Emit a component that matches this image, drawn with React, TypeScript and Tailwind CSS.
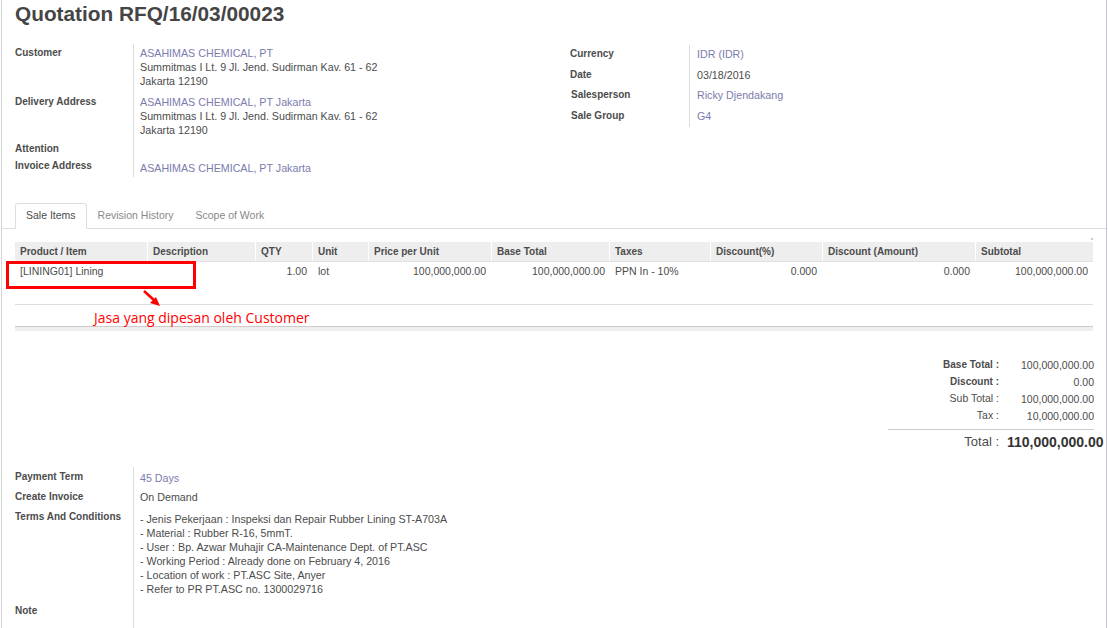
export default function App() {
  const link = "text-[#7c7bad]";

  const columns = [
    { title: "Product / Item", w: "w-[132px]" },
    { title: "Description", w: "w-[108px]" },
    { title: "QTY", w: "w-[57px]" },
    { title: "Unit", w: "w-[56px]" },
    { title: "Price per Unit", w: "w-[123px]" },
    { title: "Base Total", w: "w-[118px]" },
    { title: "Taxes", w: "w-[101px]" },
    { title: "Discount(%)", w: "w-[112px]" },
    { title: "Discount (Amount)", w: "w-[153px]" },
    { title: "Subtotal", w: "w-[118px]" },
  ];

  const terms = [
    "- Jenis Pekerjaan : Inspeksi dan Repair Rubber Lining ST-A703A",
    "- Material : Rubber R-16, 5mmT.",
    "- User : Bp. Azwar Muhajir CA-Maintenance Dept. of PT.ASC",
    "- Working Period : Already done on February 4, 2016",
    "- Location of work : PT.ASC Site, Anyer",
    "- Refer to PR PT.ASC no. 1300029716",
  ];

  return (
    <div className="w-[1108px] h-[628px] overflow-hidden bg-white pl-[1px] font-['Liberation_Sans',Arial,sans-serif] text-[#4c4c4c]">
      <div className="relative w-[1106px] h-[628px] border-l border-r border-l-[#d4d4d4] border-r-[#c4c4d4]">
        {/* title */}
        <h1 className="pl-[13px] h-[28px] leading-[28px] text-[20.8px] font-bold text-[#454545]">
          Quotation RFQ/16/03/00023
        </h1>

        {/* header fields */}
        <div className="flex mt-[16px] pl-[13px] text-[10.7px] leading-[14px]">
          <div className="w-[555px] grid grid-cols-[118px_1fr] content-start">
            <div className="pt-[2px] text-[10px] font-bold">Customer</div>
            <div className="pt-[2px] pl-[6px] border-l border-[#ddd]">
              <div className={link}>ASAHIMAS CHEMICAL, PT</div>
              <div>Summitmas I Lt. 9 Jl. Jend. Sudirman Kav. 61 - 62</div>
              <div>Jakarta 12190</div>
            </div>
            <div className="pt-[7px] text-[10px] font-bold">Delivery Address</div>
            <div className="pt-[7px] pl-[6px] border-l border-[#ddd]">
              <div className={link}>ASAHIMAS CHEMICAL, PT Jakarta</div>
              <div>Summitmas I Lt. 9 Jl. Jend. Sudirman Kav. 61 - 62</div>
              <div>Jakarta 12190</div>
            </div>
            <div className="pt-[5px] text-[10px] font-bold">Attention</div>
            <div className="pt-[5px] pl-[6px] border-l border-[#ddd] h-[19px]"></div>
            <div className="pt-[3px] text-[10px] font-bold">Invoice Address</div>
            <div className="pt-[5px] pb-[2px] pl-[6px] border-l border-[#ddd]">
              <div className={link}>ASAHIMAS CHEMICAL, PT Jakarta</div>
            </div>
          </div>

          <div className="w-[410px] mt-[1px] grid grid-cols-[119px_1fr] content-start">
            <div className="pt-[2px] text-[10px] font-bold">Currency</div>
            <div className={`pt-[2px] pl-[7px] border-l border-[#ddd] ${link}`}>IDR (IDR)</div>
            <div className="pt-[7px] text-[10px] font-bold">Date</div>
            <div className="pt-[7px] pl-[7px] border-l border-[#ddd]">03/18/2016</div>
            <div className="pt-[6px] pl-[1px] text-[10px] font-bold">Salesperson</div>
            <div className={`pt-[6px] pl-[7px] border-l border-[#ddd] ${link}`}>Ricky Djendakang</div>
            <div className="pt-[7px] pl-[1px] text-[10px] font-bold">Sale Group</div>
            <div className={`pt-[7px] pb-[4px] pl-[7px] border-l border-[#ddd] ${link}`}>G4</div>
          </div>
        </div>

        {/* tabs */}
        <div className="flex mt-[26px] pl-[13px] border-b border-[#ddd] text-[10.5px]">
          <div className="-mb-px h-[26px] px-[10px] pb-[1px] flex items-center bg-white border border-[#ddd] border-b-white rounded-t-[3px] text-[#4c4c4c]">
            Sale Items
          </div>
          <div className="-mb-px h-[26px] px-[10px] pb-[1px] flex items-center border border-transparent text-[#888]">
            Revision History
          </div>
          <div className="-mb-px h-[26px] px-[10px] pb-[1px] flex items-center border border-transparent text-[#888]">
            Scope of Work
          </div>
        </div>

        {/* order lines */}
        <div className="mt-[13px] ml-[13px] w-[1078px]">
          <div className="flex h-[20px] bg-[#eeeeee] border-b border-[#e2e2e2] text-[10px] font-bold">
            {columns.map((c, i) => (
              <div
                key={c.title}
                className={`${c.w} shrink-0 pl-[5px] leading-[19px] ${i > 0 ? "border-l border-white" : ""}`}
              >
                {c.title}
              </div>
            ))}
          </div>
          <div className="flex h-[20px] leading-[19px] text-[10.5px]">
            <div className="w-[132px] shrink-0 pl-[5px]">[LINING01] Lining</div>
            <div className="w-[108px] shrink-0"></div>
            <div className="w-[57px] shrink-0 pr-[5px] text-right">1.00</div>
            <div className="w-[56px] shrink-0 pl-[6px]">lot</div>
            <div className="w-[123px] shrink-0 pr-[5px] text-right">100,000,000.00</div>
            <div className="w-[118px] shrink-0 pr-[4px] text-right">100,000,000.00</div>
            <div className="w-[101px] shrink-0 pl-[6px]">PPN In - 10%</div>
            <div className="w-[112px] shrink-0 pr-[5px] text-right">0.000</div>
            <div className="w-[153px] shrink-0 pr-[5px] text-right">0.000</div>
            <div className="w-[118px] shrink-0 pr-[5px] text-right">100,000,000.00</div>
          </div>
          <div className="h-[22px]"></div>
          <div className="h-[22px] border-t border-[#dddddd]"></div>
          <div className="h-[5px] bg-[#eeeeee] border-t border-[#cccccc]"></div>
        </div>

        {/* totals */}
        <div className="flex flex-col items-end mt-[25px] pr-[12px] text-[10.5px]">
          <div className="w-[206px]">
            {[
              ["Base Total :", "100,000,000.00", true],
              ["Discount :", "0.00", true],
              ["Sub Total :", "100,000,000.00", false],
              ["Tax :", "10,000,000.00", false],
            ].map(([label, value, bold]) => (
              <div key={label as string} className="grid grid-cols-[111px_95px] h-[17px] leading-[17px]">
                <div className={`text-right ${bold ? "font-bold text-[10px]" : "text-[10.5px]"}`}>{label}</div>
                <div className="text-right pt-[1px]">{value}</div>
              </div>
            ))}
            <div className="mt-[5px] border-t border-[#cccccc]"></div>
          </div>
        </div>
        <div className="flex justify-end">
          <div className="w-[218px] grid grid-cols-[111px_1fr] h-[24px] leading-[24px]">
            <div className="text-right text-[13px]">Total :</div>
            <div className="pl-[8px] font-bold whitespace-nowrap text-[14px] text-[#333]">110,000,000.00</div>
          </div>
        </div>

        {/* bottom fields */}
        <div className="mt-[13px] ml-[13px] w-[540px] grid grid-cols-[118px_1fr] text-[10.7px] leading-[14px]">
          <div className="pt-[3px] text-[10px] font-bold">Payment Term</div>
          <div className={`pt-[4px] pl-[6px] border-l border-[#ddd] ${link}`}>45 Days</div>
          <div className="pt-[5px] text-[10px] font-bold">Create Invoice</div>
          <div className="pt-[5px] pl-[6px] border-l border-[#ddd]">On Demand</div>
          <div className="pt-[6px] text-[10px] font-bold">Terms And Conditions</div>
          <div className="pt-[8px] pl-[6px] border-l border-[#ddd]">
            {terms.map((t) => (
              <div key={t}>{t}</div>
            ))}
          </div>
          <div className="pt-[8px] text-[10px] font-bold">Note</div>
          <div className="pt-[8px] pl-[6px] border-l border-[#ddd] h-[60px]"></div>
        </div>

        {/* annotation over the table */}
        <div className="absolute left-[4px] top-[261px] w-[190px] h-[28px] border-[3px] border-[#ff0000]"></div>
        <svg className="absolute left-[138px] top-[288px]" width="24" height="22" viewBox="0 0 24 22">
          <line x1="4" y1="3" x2="15" y2="13" stroke="#ff0000" strokeWidth="2.6" />
          <polygon points="20,18 10,15 16,9" fill="#ff0000" />
        </svg>
        <div className="absolute left-[92px] top-[309px] leading-[18px] text-[14px] text-[#ff0000] font-['Open_Sans',sans-serif] whitespace-nowrap">
          Jasa yang dipesan oleh Customer
        </div>
        <div className="absolute left-[1089px] top-[238px] w-[2px] h-[2px] bg-[#cccccc]"></div>
      </div>
    </div>
  );
}
